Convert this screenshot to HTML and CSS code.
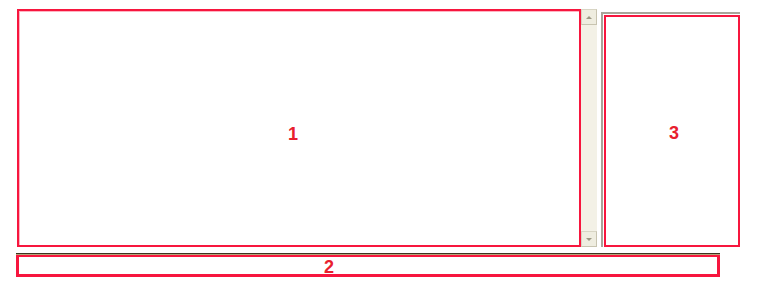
FILE: index.html
```html
<!DOCTYPE html>
<html>
<head>
<meta charset="utf-8">
<link rel="stylesheet" href="styles.css">
</head>
<body>
<div class="top">
  <div class="pane1"><span class="label">1</span></div>
  <div class="scrollbar">
    <div class="sbtn"><span class="arrow up"></span></div>
    <div class="track"></div>
    <div class="sbtn"><span class="arrow down"></span></div>
  </div>
  <div class="frame3">
    <div class="pane3"><span class="label">3</span></div>
  </div>
</div>
<div class="bar2">
  <div class="pane2"><span class="label">2</span></div>
</div>
</body>
</html>
```
FILE: styles.css
```css
html, body {
  margin: 0;
  padding: 0;
  background: #ffffff;
  font-family: "Liberation Sans", Arial, sans-serif;
}
.top {
  display: flex;
  align-items: flex-start;
  padding: 9px 0 0 17px;
}
.label {
  color: #e8202e;
  font-weight: bold;
  font-size: 18px;
  line-height: 1;
}
.pane1 {
  box-sizing: border-box;
  width: 564px;
  height: 238px;
  border: 2px solid #f7163e;
  box-shadow: inset 1px 1px 0 #ffb3c2;
  padding: 12px 12px 0 0;
  display: flex;
  align-items: center;
  justify-content: center;
}
.scrollbar {
  box-sizing: border-box;
  width: 16px;
  height: 238px;
  background: #f3f1e6;
  display: flex;
  flex-direction: column;
}
.track { flex: 1; }
.sbtn {
  box-sizing: border-box;
  height: 16px;
  background: #efede0;
  border: 1px solid #d8d5c4;
  border-right-color: #c8c4b0;
  border-bottom-color: #c8c4b0;
  display: flex;
  align-items: center;
  justify-content: center;
}
.arrow {
  width: 0;
  height: 0;
  border-left: 3px solid transparent;
  border-right: 3px solid transparent;
}
.arrow.up { border-bottom: 3px solid #9b9883; }
.arrow.down { border-top: 3px solid #9b9883; }
.frame3 {
  box-sizing: border-box;
  margin-left: 4px;
  margin-top: 3px;
  width: 139px;
  height: 235px;
  border-top: 2px solid #a8a59a;
  border-left: 2px solid #a8a59a;
  padding: 1px 0 0 1px;
  display: flex;
}
.pane3 {
  box-sizing: border-box;
  flex: 1;
  border: 2px solid #f7163e;
  padding: 4px 0 0 4px;
  display: flex;
  align-items: center;
  justify-content: center;
}
.bar2 {
  box-sizing: border-box;
  margin: 6px 0 0 16px;
  width: 704px;
  border-top: 1px solid #3a3320;
  box-shadow: inset 0 1px 0 #b6a57a;
  padding-top: 1px;
}
.pane2 {
  box-sizing: border-box;
  height: 22px;
  border: 3px solid #f7163e;
  border-top-width: 2px;
  padding: 2px 78px 0 0;
  display: flex;
  align-items: center;
  justify-content: center;
}
```
